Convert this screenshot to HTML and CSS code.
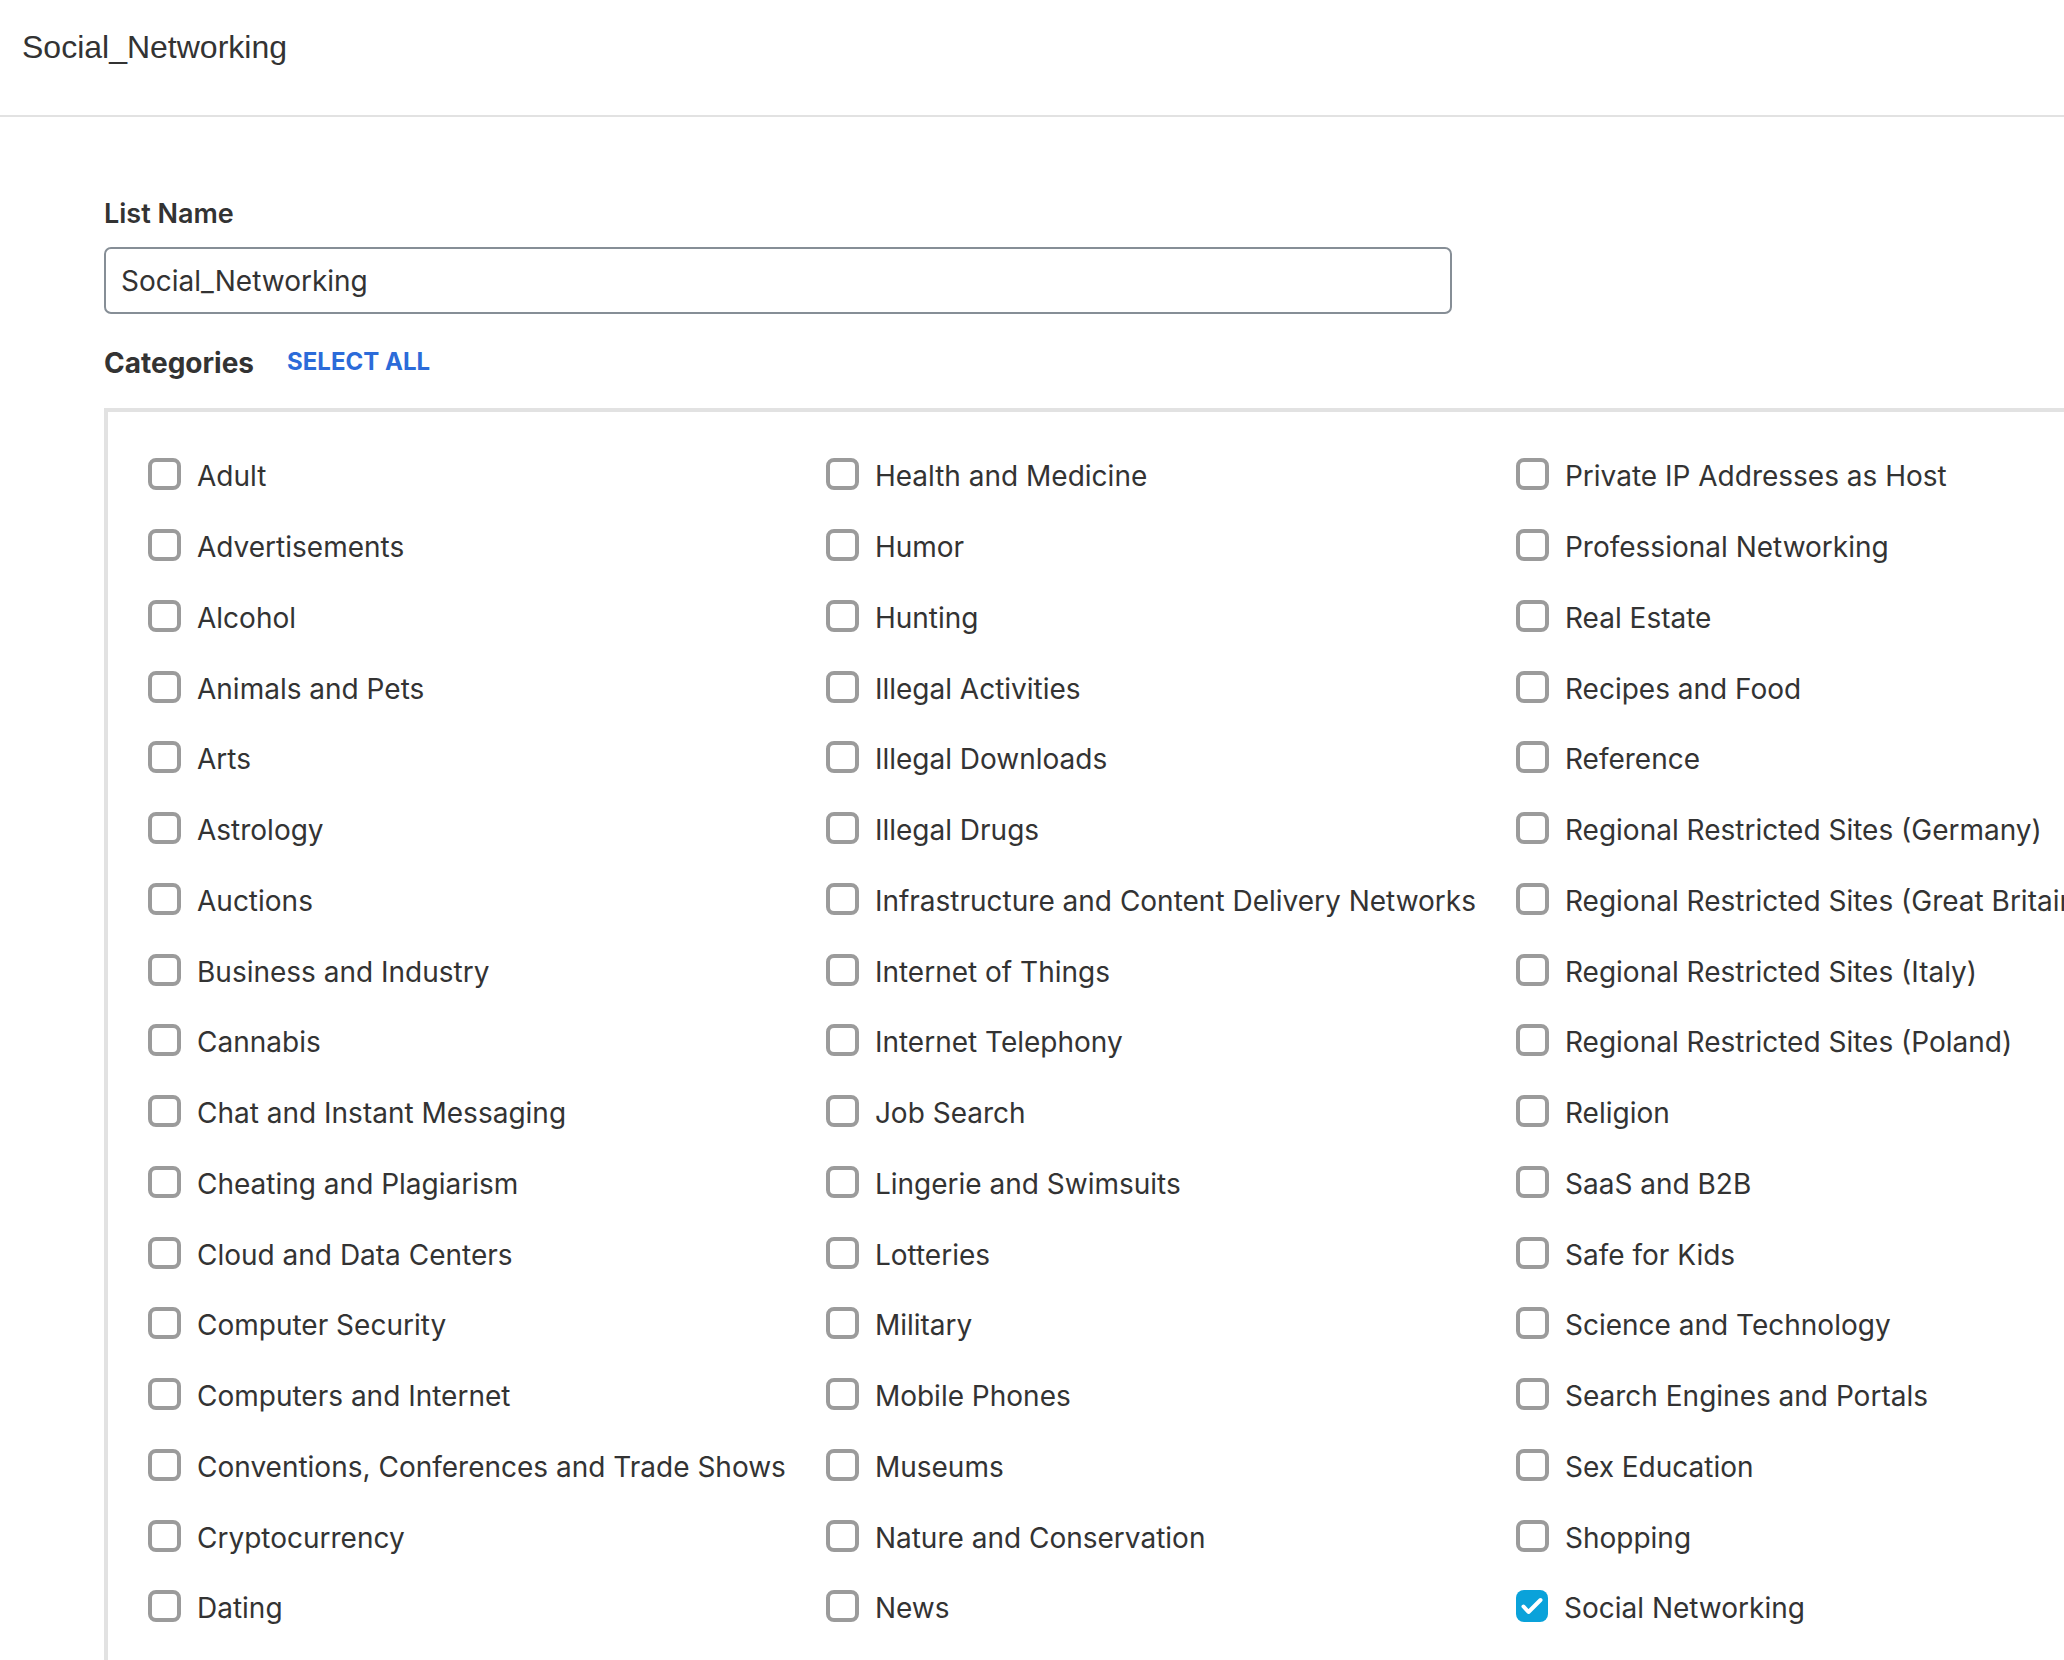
FILE: index.html
```html
<!DOCTYPE html>
<html>
<head>
<meta charset="utf-8">
<link rel="stylesheet" href="styles.css">
</head>
<body>
<header class="topbar"><h1 class="title">Social_Networking</h1></header>
<main class="content">
  <label class="field-label" for="listname">List Name</label>
  <input id="listname" class="text-input" type="text" value="Social_Networking">
  <div class="cat-head">
    <span class="cat-title">Categories</span>
    <a class="select-all" href="#">SELECT ALL</a>
  </div>
  <div class="panel">
    <div class="grid">
      <div class="item"><span class="box"></span><span class="lbl">Adult</span></div>
      <div class="item"><span class="box"></span><span class="lbl">Advertisements</span></div>
      <div class="item"><span class="box"></span><span class="lbl">Alcohol</span></div>
      <div class="item"><span class="box"></span><span class="lbl">Animals and Pets</span></div>
      <div class="item"><span class="box"></span><span class="lbl">Arts</span></div>
      <div class="item"><span class="box"></span><span class="lbl">Astrology</span></div>
      <div class="item"><span class="box"></span><span class="lbl">Auctions</span></div>
      <div class="item"><span class="box"></span><span class="lbl">Business and Industry</span></div>
      <div class="item"><span class="box"></span><span class="lbl">Cannabis</span></div>
      <div class="item"><span class="box"></span><span class="lbl">Chat and Instant Messaging</span></div>
      <div class="item"><span class="box"></span><span class="lbl">Cheating and Plagiarism</span></div>
      <div class="item"><span class="box"></span><span class="lbl">Cloud and Data Centers</span></div>
      <div class="item"><span class="box"></span><span class="lbl">Computer Security</span></div>
      <div class="item"><span class="box"></span><span class="lbl">Computers and Internet</span></div>
      <div class="item"><span class="box"></span><span class="lbl">Conventions, Conferences and Trade Shows</span></div>
      <div class="item"><span class="box"></span><span class="lbl">Cryptocurrency</span></div>
      <div class="item"><span class="box"></span><span class="lbl">Dating</span></div>

      <div class="item"><span class="box"></span><span class="lbl">Health and Medicine</span></div>
      <div class="item"><span class="box"></span><span class="lbl">Humor</span></div>
      <div class="item"><span class="box"></span><span class="lbl">Hunting</span></div>
      <div class="item"><span class="box"></span><span class="lbl">Illegal Activities</span></div>
      <div class="item"><span class="box"></span><span class="lbl">Illegal Downloads</span></div>
      <div class="item"><span class="box"></span><span class="lbl">Illegal Drugs</span></div>
      <div class="item"><span class="box"></span><span class="lbl">Infrastructure and Content Delivery Networks</span></div>
      <div class="item"><span class="box"></span><span class="lbl">Internet of Things</span></div>
      <div class="item"><span class="box"></span><span class="lbl">Internet Telephony</span></div>
      <div class="item"><span class="box"></span><span class="lbl">Job Search</span></div>
      <div class="item"><span class="box"></span><span class="lbl">Lingerie and Swimsuits</span></div>
      <div class="item"><span class="box"></span><span class="lbl">Lotteries</span></div>
      <div class="item"><span class="box"></span><span class="lbl">Military</span></div>
      <div class="item"><span class="box"></span><span class="lbl">Mobile Phones</span></div>
      <div class="item"><span class="box"></span><span class="lbl">Museums</span></div>
      <div class="item"><span class="box"></span><span class="lbl">Nature and Conservation</span></div>
      <div class="item"><span class="box"></span><span class="lbl">News</span></div>

      <div class="item"><span class="box"></span><span class="lbl">Private IP Addresses as Host</span></div>
      <div class="item"><span class="box"></span><span class="lbl">Professional Networking</span></div>
      <div class="item"><span class="box"></span><span class="lbl">Real Estate</span></div>
      <div class="item"><span class="box"></span><span class="lbl">Recipes and Food</span></div>
      <div class="item"><span class="box"></span><span class="lbl">Reference</span></div>
      <div class="item"><span class="box"></span><span class="lbl">Regional Restricted Sites (Germany)</span></div>
      <div class="item"><span class="box"></span><span class="lbl">Regional Restricted Sites (Great Britain)</span></div>
      <div class="item"><span class="box"></span><span class="lbl">Regional Restricted Sites (Italy)</span></div>
      <div class="item"><span class="box"></span><span class="lbl">Regional Restricted Sites (Poland)</span></div>
      <div class="item"><span class="box"></span><span class="lbl">Religion</span></div>
      <div class="item"><span class="box"></span><span class="lbl">SaaS and B2B</span></div>
      <div class="item"><span class="box"></span><span class="lbl">Safe for Kids</span></div>
      <div class="item"><span class="box"></span><span class="lbl">Science and Technology</span></div>
      <div class="item"><span class="box"></span><span class="lbl">Search Engines and Portals</span></div>
      <div class="item"><span class="box"></span><span class="lbl">Sex Education</span></div>
      <div class="item"><span class="box"></span><span class="lbl">Shopping</span></div>
      <div class="item"><span class="box checked"><svg viewBox="0 0 32 32" width="32" height="32"><path d="M7.5 16.5 L12.5 22 L24.5 10" fill="none" stroke="#fff" stroke-width="4" stroke-linecap="round" stroke-linejoin="round"/></svg></span><span class="lbl">Social Networking</span></div>
    </div>
  </div>
</main>
</body>
</html>
```

FILE: styles.css
```css
html {
  overflow: hidden;
}
body {
  margin: 0;
  background: #fff;
  color: #333;
  font-family: Inter, "Noto Sans", sans-serif;
}
.topbar {
  height: 117px;
  border-bottom: 2px solid #e2e2e2;
  padding: 27px 0 0 22px;
  box-sizing: border-box;
}
.title {
  margin: 0;
  font-family: "Liberation Sans", Arial, sans-serif;
  font-weight: 400;
  font-size: 32px;
  line-height: 40px;
  color: #333;
}
.content {
  padding: 79px 0 0 104px;
}
.field-label {
  display: block;
  font-size: 27px;
  font-weight: 600;
  line-height: 36px;
  color: #333;
}
.text-input {
  display: block;
  margin-top: 15px;
  width: 1348px;
  height: 67px;
  box-sizing: border-box;
  border: 2px solid #868e96;
  border-radius: 7px;
  padding: 0 15px;
  font-family: Inter, "Noto Sans", sans-serif;
  font-size: 28px;
  color: #333;
  outline: none;
}
.cat-head {
  display: flex;
  align-items: center;
  gap: 33px;
  margin-top: 27px;
  height: 40px;
}
.cat-title {
  font-size: 28px;
  font-weight: 700;
  color: #333;
  position: relative;
  top: 2px;
}
.select-all {
  font-size: 24px;
  font-weight: 700;
  color: #2b6bd9;
  text-decoration: none;
}
.panel {
  margin-top: 27px;
  border-top: 4px solid #e2e2e2;
  border-left: 4px solid #e2e2e2;
  padding: 29px 40px 40px 40px;
  width: max-content;
}
.grid {
  display: grid;
  grid-template-rows: repeat(17, 70.75px);
  grid-auto-flow: column;
  grid-auto-columns: max-content;
  column-gap: 40px;
}
.item {
  display: flex;
  align-items: center;
  gap: 16px;
}
.box {
  width: 33px;
  height: 32px;
  box-sizing: border-box;
  border: 4px solid #9b9b9b;
  border-radius: 8px;
  flex: none;
  position: relative;
  top: -2px;
}
.box.checked {
  width: 32px;
  border: none;
  background: #0aa2da;
}
.box svg {
  display: block;
}
.lbl {
  font-size: 28px;
  line-height: 36px;
  color: #333;
  white-space: nowrap;
}
```
